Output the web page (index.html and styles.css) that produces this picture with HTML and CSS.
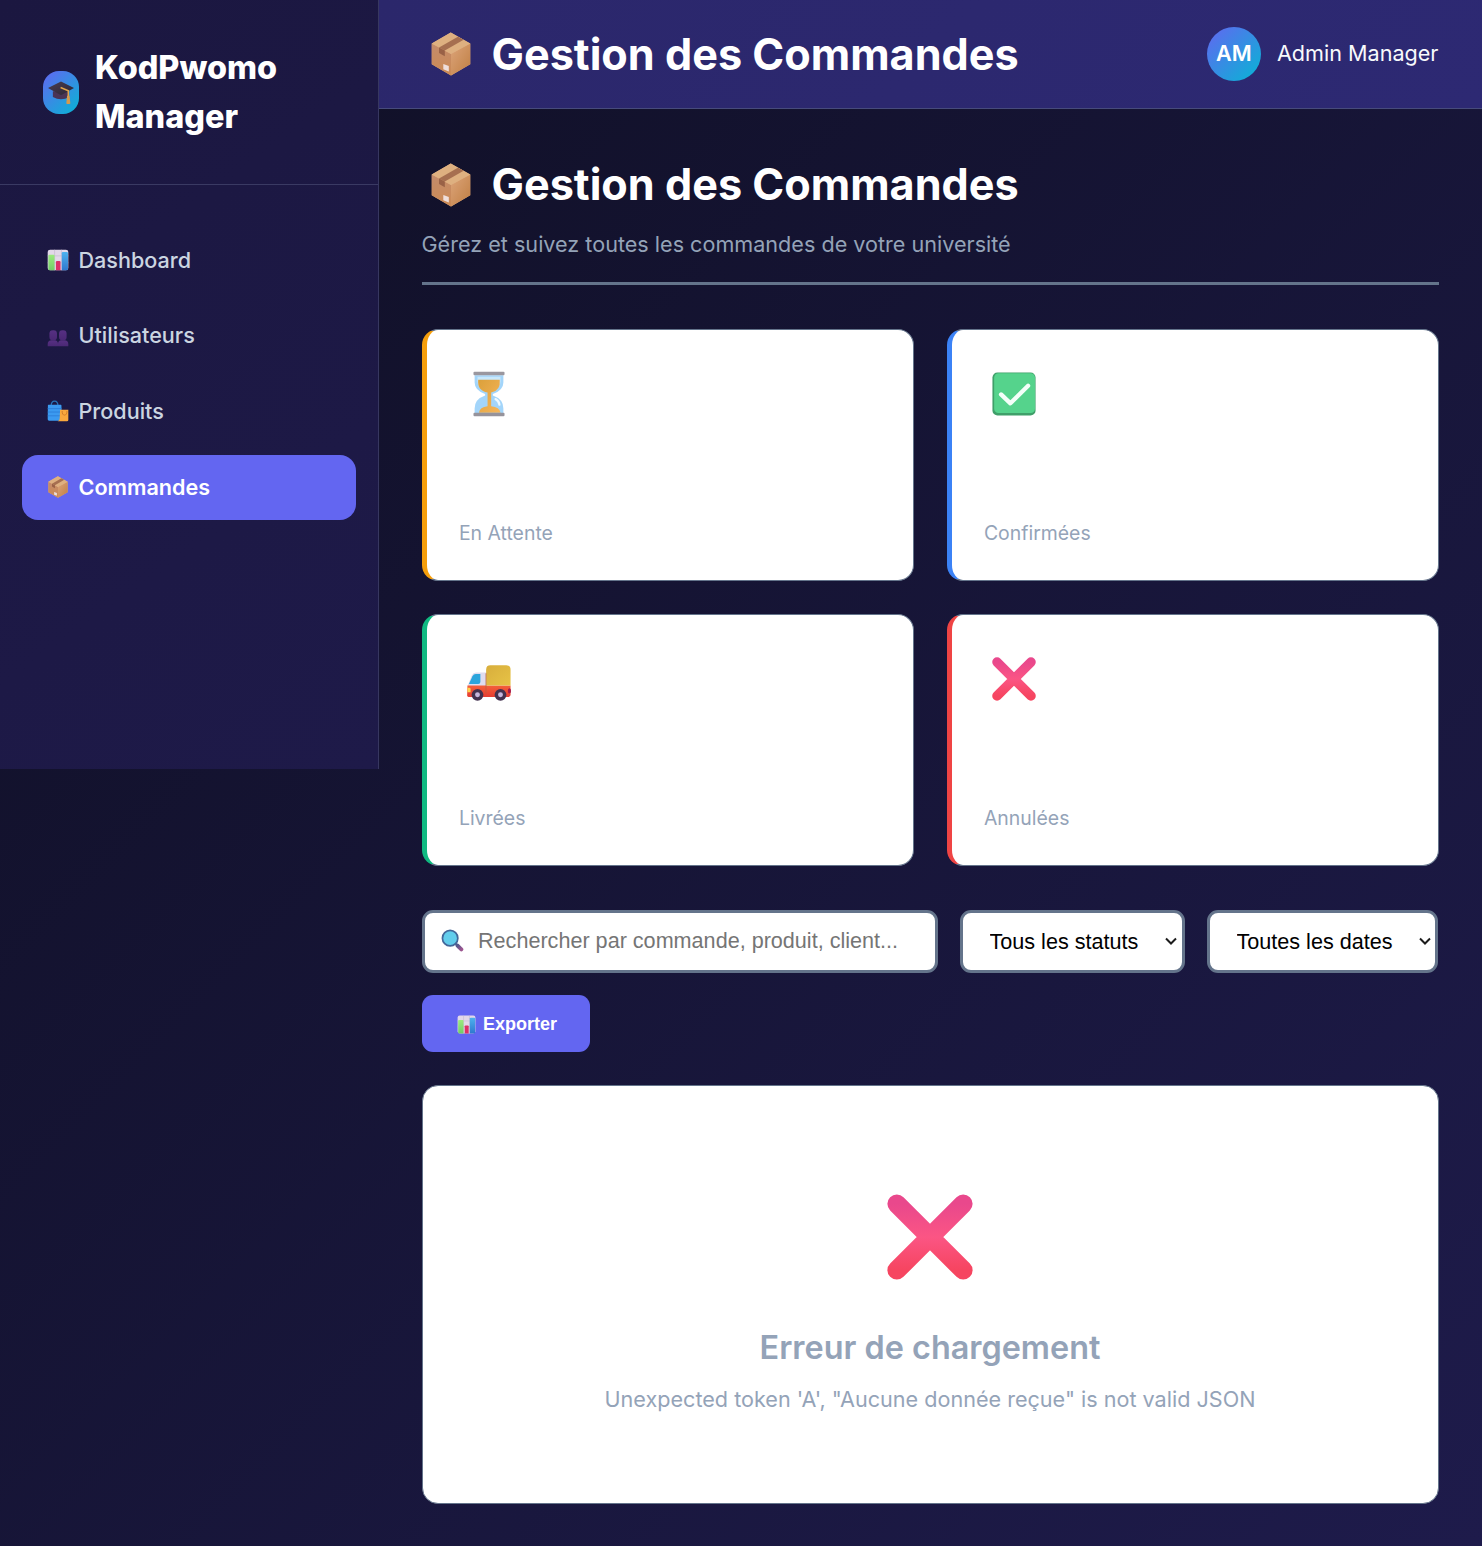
FILE: index.html
```html
<!DOCTYPE html>
<html lang="fr">
<head>
<meta charset="utf-8">
<title>KodPwomo Manager - Gestion des Commandes</title>
<link rel="stylesheet" href="styles.css">
</head>
<body>
<svg class="sprite" aria-hidden="true">
  <defs>
    <linearGradient id="g-box-r" x1="0" y1="0" x2="1" y2="1"><stop offset="0" stop-color="#dca47a"/><stop offset="1" stop-color="#c07f43"/></linearGradient>
    <linearGradient id="g-box-l" x1="0" y1="0" x2="0" y2="1"><stop offset="0" stop-color="#c48b6b"/><stop offset="1" stop-color="#cc8b55"/></linearGradient>
    <linearGradient id="g-x" x1="0" y1="0" x2="0" y2="1"><stop offset="0" stop-color="#e9488c"/><stop offset=".5" stop-color="#fb5584"/><stop offset="1" stop-color="#f64560"/></linearGradient>
    <linearGradient id="g-green" x1="0" y1="0" x2="0" y2="1"><stop offset="0" stop-color="#9bea7e"/><stop offset="1" stop-color="#72ce68"/></linearGradient>
    <linearGradient id="g-blue" x1="0" y1="0" x2="0" y2="1"><stop offset="0" stop-color="#4db2ee"/><stop offset="1" stop-color="#2f78cf"/></linearGradient>
    <linearGradient id="g-sand" x1="0" y1="0" x2="1" y2="1"><stop offset="0" stop-color="#dba03b"/><stop offset="1" stop-color="#f7b65a"/></linearGradient>
    <linearGradient id="g-cargo" x1="0" y1="0" x2="1" y2="1"><stop offset="0" stop-color="#d8ae3c"/><stop offset="1" stop-color="#e7c346"/></linearGradient>
    <linearGradient id="g-red" x1="0" y1="0" x2="0" y2="1"><stop offset="0" stop-color="#f4603a"/><stop offset="1" stop-color="#e63c32"/></linearGradient>
    <linearGradient id="g-people" x1="0" y1="0" x2="0" y2="1"><stop offset="0" stop-color="#573083"/><stop offset="1" stop-color="#4a2874"/></linearGradient>
    <linearGradient id="g-handle" x1="0" y1="0" x2="1" y2="1"><stop offset="0" stop-color="#55588c"/><stop offset="1" stop-color="#9b558f"/></linearGradient>
    <linearGradient id="g-cap" x1="0" y1="0" x2="1" y2="1"><stop offset="0" stop-color="#4b3c4d"/><stop offset="1" stop-color="#2b2638"/></linearGradient>
  </defs>
  <symbol id="i-box" viewBox="0 0 32 32">
    <path d="M2 8.300 15.800.4 30 8.300V23.500L16 31.600 2 23.500Z" fill="#dca77c"/>
    <path d="M2 8.300 16 16v15.600L2 23.500Z" fill="url(#g-box-l)"/>
    <path d="M30 8.300 16 16v15.600l14-8.100Z" fill="url(#g-box-r)"/>
    <path d="M2 8.300 15.800.4 30 8.300 16 16Z" fill="#deb080"/>
    <path d="M7.300 11.200 21 3.400l4.200 2.200L11.500 13.500Z" fill="#a66f50"/>
    <path d="M7.300 11.200l4.200 2.300v4.200l-4.200-2.400Z" fill="#996146"/>
    <path d="M10.400 23.300l4 1.500v4l-4-1.700Z" fill="#efdfdc"/>
  </symbol>
  <symbol id="i-chart" viewBox="0 0 32 32">
    <rect x="1" y="1" width="30" height="30" rx="3.500" fill="#e2d8e9"/>
    <path d="M11 1v30M21 1v30M1 10h30M1 20h30" stroke="#c3b6cf" stroke-width=".9"/>
    <path d="M2 10q0-1.500 1.500-1.500h6Q11 8.500 11 10v21H4q-2 0-2-2Z" fill="url(#g-green)"/>
    <path d="M13 19q0-1.500 1.500-1.500h3.700q1.500 0 1.500 1.500v12H13Z" fill="#dc3068"/>
    <path d="M21.500 6Q21.500 4.500 23 4.500h6Q30.500 4.500 30.500 6v23q0 2-2 2h-7Z" fill="url(#g-blue)"/>
  </symbol>
  <symbol id="i-users" viewBox="0 0 32 32">
    <g fill="url(#g-people)">
      <path d="M1 30v-2.500Q1 22 7 22h4q5 0 5 5.500V30q0 .8-.8.8H1.800Q1 30.800 1 30Z"/>
      <path d="M16 30v-2.500Q16 22 21 22h4q6 0 6 5.500V30q0 .8-.8.8H16.800Q16 30.800 16 30Z"/>
      <rect x="3.500" y="7.500" width="11" height="15" rx="5"/>
      <rect x="17.500" y="7.500" width="11" height="15" rx="5"/>
    </g>
  </symbol>
  <symbol id="i-bags" viewBox="0 0 32 32">
    <path d="M6 9Q6 1.500 11 1.500T16 9" fill="none" stroke="#2874b8" stroke-width="1.800"/>
    <path d="M2 7h18q1 0 1 1l.5 20q0 2-2 2H3q-2 0-2-2L1.300 8Q1.300 7 2 7Z" fill="#3b9af0"/>
    <path d="M1 12.500h20M1 17.500h20M1 23h20" stroke="#2b7dd9" stroke-width="1.300"/>
    <path d="M19 14h12v15q0 2-2 2H15.500q3-1 3-4Z" fill="#f9a83d"/>
    <path d="M22 16q0 6 3.500 6t3.500-6" fill="none" stroke="#cf7929" stroke-width="1.300"/>
  </symbol>
  <symbol id="i-cap" viewBox="0 0 32 32">
    <path d="M6 15v7q10 6 20 0v-7Z" fill="#4a3456"/>
    <path d="M0 11 16 3l16 8-16 9Z" fill="url(#g-cap)"/>
    <path d="M15.500 10.500 25 14.500V23" fill="none" stroke="#e2a44a" stroke-width="1.900"/>
    <path d="M23.500 20.500h3l1 9.500q-2.500 1.500-5 0Z" fill="#d79a4d"/>
  </symbol>
  <symbol id="i-hourglass" viewBox="0 0 32 32">
    <path d="M6 3h20v5q0 5.500-7.300 8v1q7.300 2.500 7.300 9V29.500H6V26q0-6.500 7.300-9v-1Q6 13.500 6 8Z" fill="#a3d5fa"/>
    <path d="M8 4h16v3.500q0 5-7 7h-2q-7-2-7-7Z" fill="#c9e8fb"/>
    <path d="M8.500 6h15q.8 7.500-6 9V24.500q6 .5 6.500 4.500H9q.5-4 6-4.500V15Q7.700 13.500 8.500 6Z" fill="url(#g-sand)"/>
    <path d="M20.500 19.500q2.500 1.500 2.800 4" stroke="#eef9ff" stroke-width="1.500" fill="none" stroke-linecap="round"/>
    <rect x="5.200" y=".5" width="21.600" height="2.500" rx=".7" fill="#9a979f"/>
    <rect x="5.200" y="29" width="21.600" height="2.500" rx=".7" fill="#96939b"/>
  </symbol>
  <symbol id="i-check" viewBox="0 0 32 32">
    <rect x="1" y="1" width="30" height="30" rx="3.500" fill="#3f9f69"/>
    <rect x="2.200" y="1.500" width="28.400" height="27.800" rx="3" fill="#55d38c"/>
    <path d="M7 16.300l6.500 6.200L25.800 10.300" fill="none" stroke="#f4fff9" stroke-width="3" stroke-linecap="round" stroke-linejoin="round"/>
  </symbol>
  <symbol id="i-truck" viewBox="0 0 32 32">
    <path d="M1 21 4 13.500Q5 11.500 7 11.500h7.500V21Z" fill="#dfdcef"/>
    <path d="M2 19.500 4.500 14q.8-1.500 2.300-1.500H10v5.500q0 1.500-1.500 1.500Z" fill="#2ba5dc"/>
    <path d="M1 20.500h30V27q0 1.500-1.500 1.500H1.800Q.8 28.500.8 27.500Z" fill="url(#g-red)"/>
    <path d="M14 9.500Q14 6.500 17 6.500h11q3 0 3 3v11H14Z" fill="url(#g-cargo)"/>
    <path d="M13.900 12v14" stroke="#b95f43" stroke-width=".5"/>
    <path d="M1 22h1.300q.9 0 .9 1v2.300H1Z" fill="#ffd34d"/>
    <ellipse cx="30.200" cy="24.300" rx="1.100" ry="1.800" fill="#a21b4c"/>
    <g fill="#43314f"><circle cx="8" cy="27" r="4.100"/><circle cx="24" cy="27" r="4.100"/></g>
    <g fill="#c6b7dd"><circle cx="8" cy="27" r="1.700"/><circle cx="24" cy="27" r="1.700"/></g>
  </symbol>
  <symbol id="i-cross" viewBox="0 0 32 32">
    <path d="M4.200 4.200 27.800 27.800M27.800 4.200 4.200 27.801" fill="none" stroke="url(#g-x)" stroke-width="6.700" stroke-linecap="round"/>
  </symbol>
  <symbol id="i-search" viewBox="0 0 32 32">
    <path d="M20 20l3.500 3.500" stroke="#4a6a98" stroke-width="3"/>
    <path d="M23 23l5.300 5.300" stroke="url(#g-handle)" stroke-width="5.500" stroke-linecap="round"/>
    <circle cx="12.700" cy="12.700" r="10.700" fill="#62cdec" stroke="#42679a" stroke-width="2.400"/>
  </symbol>
  <symbol id="i-down" viewBox="0 0 14 14">
    <path d="M2 4.500 7 9.500l5-5" fill="none" stroke="#1c1c1c" stroke-width="2"/>
  </symbol>
</svg>

<div class="layout">
  <aside class="sidebar">
    <div class="brand">
      <span class="brand-icon"><svg><use href="#i-cap"/></svg></span>
      <span class="brand-name">KodPwomo Manager</span>
    </div>
    <nav class="nav">
      <a class="nav-item"><svg><use href="#i-chart"/></svg>Dashboard</a>
      <a class="nav-item"><svg><use href="#i-users"/></svg>Utilisateurs</a>
      <a class="nav-item"><svg><use href="#i-bags"/></svg>Produits</a>
      <a class="nav-item active"><svg><use href="#i-box"/></svg>Commandes</a>
    </nav>
  </aside>

  <main class="main">
    <header class="topbar">
      <h1 class="title"><svg><use href="#i-box"/></svg>Gestion des Commandes</h1>
      <div class="user"><span class="avatar">AM</span><span class="user-name">Admin Manager</span></div>
    </header>

    <div class="content">
      <section class="page-head">
        <h2 class="title"><svg><use href="#i-box"/></svg>Gestion des Commandes</h2>
        <p class="subtitle">Gérez et suivez toutes les commandes de votre université</p>
      </section>

      <section class="stats">
        <article class="stat pending"><svg><use href="#i-hourglass"/></svg><p>En Attente</p></article>
        <article class="stat confirmed"><svg><use href="#i-check"/></svg><p>Confirmées</p></article>
        <article class="stat delivered"><svg><use href="#i-truck"/></svg><p>Livrées</p></article>
        <article class="stat cancelled"><svg><use href="#i-cross"/></svg><p>Annulées</p></article>
      </section>

      <section class="filters">
        <label class="field search"><svg><use href="#i-search"/></svg><input type="text" placeholder="Rechercher par commande, produit, client..."></label>
        <label class="field status"><select><option>Tous les statuts</option></select><svg><use href="#i-down"/></svg></label>
        <label class="field dates"><select><option>Toutes les dates</option></select><svg><use href="#i-down"/></svg></label>
        <button class="export"><svg><use href="#i-chart"/></svg>Exporter</button>
      </section>

      <section class="error">
        <svg><use href="#i-cross"/></svg>
        <h3>Erreur de chargement</h3>
        <p>Unexpected token 'A', "Aucune donnée reçue" is not valid JSON</p>
      </section>
    </div>
  </main>
</div>
</body>
</html>
```
FILE: styles.css
```css
* { box-sizing: border-box; margin: 0; padding: 0; }

body {
  min-height: 1546px;
  font-family: Inter, "Liberation Sans", sans-serif;
  font-size: 21.6px;
  line-height: 1.6;
  color: #f8fafc;
  background: linear-gradient(135deg, #0f0f23 0%, #1e1b4b 100%);
}

svg { display: block; flex: none; }
.sprite { position: absolute; width: 0; height: 0; }

.layout { display: flex; align-items: flex-start; }

/* Sidebar */
.sidebar {
  flex: none;
  width: 378.500px;
  height: 768.500px;
  background: linear-gradient(145deg, #1b1740 0%, #1e1a49 100%);
  border-right: 1px solid #373760;
}
.brand {
  display: flex;
  align-items: center;
  gap: 16px;
  height: 185px;
  padding: 0 43px;
  border-bottom: 1px solid #3a3a63;
}
.brand-icon {
  display: flex;
  align-items: center;
  justify-content: center;
  flex: none;
  width: 36px;
  height: 43px;
  border-radius: 16px;
  background: linear-gradient(135deg, #6366f1, #06b6d4);
}
.brand-icon svg { width: 26px; height: 26px; }
.brand-name { padding-top: 2px; font-size: 32.4px; font-weight: 800; line-height: 48.6px; color: #fff; }

.nav { display: flex; flex-direction: column; gap: 11px; padding: 43px 22px; }
.nav-item {
  display: flex;
  align-items: center;
  gap: 9.500px;
  height: 64.8px;
  padding: 0 0 1px 25px;
  border-radius: 16px;
  font-weight: 500;
  color: #cbd5e1;
}
.nav-item svg { width: 22px; height: 22px; }
.nav-item.active { background: #6366f1; color: #fff; font-weight: 600; }

/* Header */
.main { flex: 1; min-width: 0; }
.topbar {
  display: flex;
  align-items: center;
  justify-content: space-between;
  height: 109px;
  padding: 0 43.500px 0 43px;
  background: linear-gradient(135deg, #2b276b, #2d2973);
  border-bottom: 1px solid #474b7b;
}
.title {
  display: flex;
  align-items: center;
  gap: 19px;
  padding-left: 7px;
  font-size: 43.2px;
  font-weight: 700;
  line-height: 64px;
  color: #fff;
}
.title svg { width: 44px; height: 44px; }
.user { display: flex; align-items: center; gap: 16px; }
.user-name { padding-bottom: 2px; }
.avatar {
  display: flex;
  align-items: center;
  justify-content: center;
  width: 54px;
  height: 54px;
  padding-bottom: 1px;
  border-radius: 50%;
  font-weight: 600;
  color: #fff;
  background: linear-gradient(135deg, #6366f1, #06b6d4);
}

/* Page content */
.content { padding: 43px 43.500px 42px 43px; }
.page-head { height: 133px; border-bottom: 3px solid #64748b; }
.page-head .title svg { margin-top: 1px; }
.subtitle { margin-top: 11px; line-height: 35px; color: #94a3b8; }

.stats {
  display: grid;
  grid-template-columns: 1fr 1fr;
  gap: 33px;
  margin-top: 43.500px;
}
.stat {
  display: flex;
  flex-direction: column;
  justify-content: space-between;
  height: 252px;
  padding: 41px 32.400px 31px;
  border: 1px solid #64748b;
  border-left-width: 5.400px;
  border-radius: 16px;
  background: #fff;
}
.stat svg { width: 46px; height: 46px; margin-left: 7px; }
.stat p { font-size: 19.44px; line-height: 31px; color: #94a3b8; }
.pending { border-left-color: #f59e0b; }
.confirmed { border-left-color: #3b82f6; }
.delivered { border-left-color: #10b981; }
.cancelled { border-left-color: #ef4444; }

/* Filters */
.filters { display: flex; flex-wrap: wrap; gap: 22px; margin-top: 44px; }
.field {
  display: flex;
  align-items: center;
  height: 63px;
  border: 3px solid #64748b;
  border-radius: 11px;
  background: #fff;
}
.field input, .field select {
  flex: 1;
  min-width: 0;
  border: 0;
  outline: 0;
  appearance: none;
  background: transparent;
  font: 21.6px "Liberation Sans", Arial, sans-serif;
  color: #000;
}
.field input::placeholder { color: #757575; }
.search { width: 516px; padding: 0 0 1px 16px; gap: 14.500px; }
.search svg { width: 23px; height: 23px; }
.status, .dates { padding: 0 3.500px 0 27px; }
.status { width: 225px; }
.dates { width: 231.500px; }
.status svg, .dates svg { width: 14px; height: 14px; }
.export {
  display: flex;
  align-items: center;
  justify-content: center;
  gap: 7px;
  width: 168px;
  height: 57px;
  padding: 3px 0 0 3px;
  border: 0;
  border-radius: 11px;
  background: #6366f1;
  color: #fff;
  font: bold 18px "Liberation Sans", Arial, sans-serif;
}
.export svg { width: 19px; height: 19px; }

/* Error state */
.error {
  display: flex;
  flex-direction: column;
  align-items: center;
  height: 419px;
  margin-top: 33px;
  padding-top: 106.500px;
  border: 1px solid #64748b;
  border-radius: 16px;
  background: #fff;
  color: #94a3b8;
}
.error svg { width: 90px; height: 90px; }
.error h3 { margin-top: 41px; font-size: 32.4px; font-weight: 600; line-height: 50px; }
.error p { margin-top: 9px; line-height: 35px; }
```
